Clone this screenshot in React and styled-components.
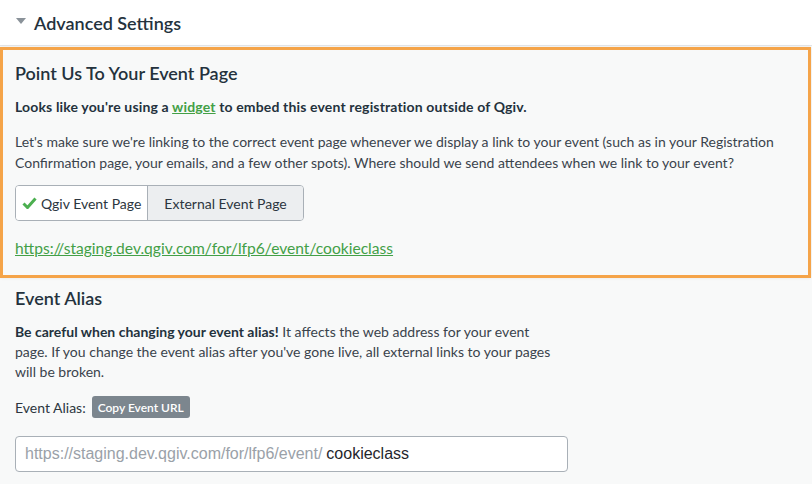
import React from "react";
import styled, { createGlobalStyle } from "styled-components";

const GlobalStyle = createGlobalStyle`
    html, body {
        margin: 0;
        padding: 0;
        background-color: #f8f9f9;
        font-family: Lato, "Open Sans", sans-serif;
        color: #2c3640;
    }
`;

const Page = styled.div`
    width: 812px;
    min-height: 484px;
    background-color: #f8f9f9;
`;

const Header = styled.div`
    display: flex;
    align-items: center;
    gap: 8px;
    height: 46px;
    padding: 0 16px;
    background-color: #fff;
    border-bottom: 1px solid #e4e6e8;
    box-sizing: border-box;
`;

const Caret = styled.span`
    width: 0;
    height: 0;
    border-left: 5px solid transparent;
    border-right: 5px solid transparent;
    border-top: 6px solid #8a9299;
    margin-top: -4px;
`;

const HeaderTitle = styled.h2`
    margin: 0;
    font-size: 18px;
    font-weight: 600;
    color: #24323d;
`;

const Highlight = styled.section`
    margin-top: 1px;
    width: 811px;
    box-sizing: border-box;
    border: 3px solid #f5a449;
    padding: 12px 12px 18px;
    background-color: #f8f9f9;
    box-shadow: 0 0 3px rgba(0, 0, 0, 0.08);
`;

const Section = styled.section`
    padding: 9px 15px;
`;

const Title = styled.h3`
    margin: 0 0 ${(p) => p.gap || 12}px;
    font-size: 18px;
    font-weight: 600;
    color: #24323d;
`;

const Lead = styled.p`
    margin: 0 0 14px;
    font-size: 14px;
    font-weight: 700;
    line-height: 21px;
    letter-spacing: 0.15px;
    color: #24323d;
`;

const Text = styled.p`
    margin: 0 0 ${(p) => p.gap || 12}px;
    font-size: 14px;
    line-height: ${(p) => p.lh || 21}px;
    color: #3a434c;
    max-width: ${(p) => p.max || "none"};

    strong {
        color: #24323d;
    }
`;

const Green = styled.a`
    color: #43a047;
    text-decoration: underline;
`;

const Toggle = styled.div`
    display: inline-flex;
    border: 1px solid #a9b0b7;
    border-radius: 4px;
    overflow: hidden;
    margin: 0 0 18px;
`;

const ToggleButton = styled.button`
    display: flex;
    align-items: center;
    gap: 4px;
    height: 34px;
    padding: 0 ${(p) => (p.active ? 6 : 16)}px;
    border: none;
    border-left: ${(p) => (p.active ? "none" : "1px solid #a9b0b7")};
    background-color: ${(p) => (p.active ? "#fff" : "#eceef0")};
    font-family: inherit;
    font-size: 14px;
    color: #2c3640;
    cursor: pointer;
`;

const UrlLink = styled.a`
    display: block;
    color: #43a047;
    font-size: 15.6px;
    line-height: 18px;
    text-decoration: underline;
`;

const AliasRow = styled.div`
    display: flex;
    align-items: center;
    gap: 6px;
    margin: 0 0 18px;
    font-size: 14px;
    color: #2c3640;
`;

const CopyButton = styled.button`
    height: 22px;
    padding: 0 6px;
    border: none;
    border-radius: 3px;
    background-color: #7c868e;
    color: #fff;
    font-family: inherit;
    font-size: 12px;
    font-weight: 600;
`;

const AliasField = styled.div`
    display: flex;
    align-items: center;
    width: 553px;
    height: 36px;
    box-sizing: border-box;
    padding: 0 9px;
    border: 1px solid #a9b0b7;
    border-radius: 4px;
    background-color: #fff;
    font-family: "Liberation Sans", Arial, sans-serif;
    font-size: 16px;
`;

const Prefix = styled.span`
    color: #9aa1a8;
    margin-right: 4px;
`;

const AliasInput = styled.input`
    flex: 1;
    border: none;
    outline: none;
    padding: 0;
    font-family: inherit;
    font-size: 16px;
    color: #1f262c;
    background: transparent;
`;

const Check = () => (
    <svg width="15" height="12" viewBox="0 0 15 12">
        <path d="M1.5 6.5 L5.5 10.5 L13.5 1.5" fill="none" stroke="#4caf50" strokeWidth="3" />
    </svg>
);

const App = () => {
    return (
        <Page>
            <GlobalStyle />
            <Header>
                <Caret />
                <HeaderTitle>Advanced Settings</HeaderTitle>
            </Header>

            <Highlight>
                <Title>Point Us To Your Event Page</Title>
                <Lead>
                    Looks like you're using a <Green href="#">widget</Green> to embed this event registration outside of Qgiv.
                </Lead>
                <Text>
                    Let's make sure we're linking to the correct event page whenever we display a link to your event (such as in your Registration Confirmation page, your emails, and a few other spots). Where should we send attendees when we link to your event?
                </Text>
                <Toggle>
                    <ToggleButton active>
                        <Check />
                        Qgiv Event Page
                    </ToggleButton>
                    <ToggleButton>External Event Page</ToggleButton>
                </Toggle>
                <UrlLink href="#">https://staging.dev.qgiv.com/for/lfp6/event/cookieclass</UrlLink>
            </Highlight>

            <Section>
                <Title gap={13}>Event Alias</Title>
                <Text max="556px" lh={20} gap={14}>
                    <strong>Be careful when changing your event alias!</strong> It affects the web address for your event
                    <br />
                    page. If you change the event alias after you've gone live, all external links to your pages will be broken.
                </Text>
                <AliasRow>
                    Event Alias:
                    <CopyButton>Copy Event URL</CopyButton>
                </AliasRow>
                <AliasField>
                    <Prefix>https://staging.dev.qgiv.com/for/lfp6/event/</Prefix>
                    <AliasInput defaultValue="cookieclass" />
                </AliasField>
            </Section>
        </Page>
    );
};

export default App;
